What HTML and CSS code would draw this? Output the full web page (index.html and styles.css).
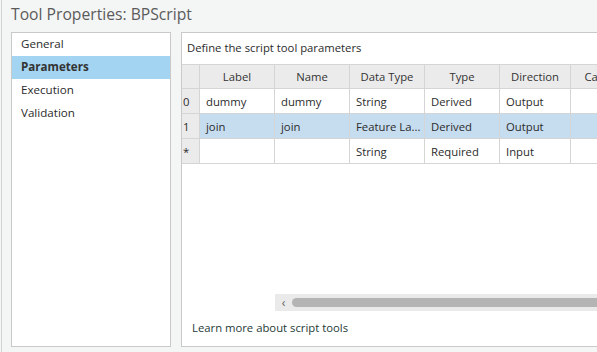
FILE: index.html
```html
<!DOCTYPE html>
<html lang="en">
<head>
    <meta charset="UTF-8">
    <title>Tool Properties: BPScript</title>
    <link rel="stylesheet" href="styles.css">
</head>
<body>
    <div class="window">
        <div class="title">Tool Properties: BPScript</div>
        <div class="main">
            <ul class="nav">
                <li class="nav-item">General</li>
                <li class="nav-item active">Parameters</li>
                <li class="nav-item">Execution</li>
                <li class="nav-item">Validation</li>
            </ul>
            <div class="content">
                <div class="caption">Define the script tool parameters</div>
                <table class="grid">
                    <colgroup>
                        <col class="c-num">
                        <col class="c-wide">
                        <col class="c-wide">
                        <col class="c-wide">
                        <col class="c-wide">
                        <col class="c-dir">
                        <col class="c-wide">
                    </colgroup>
                    <thead>
                        <tr>
                            <th></th>
                            <th>Label</th>
                            <th>Name</th>
                            <th>Data Type</th>
                            <th>Type</th>
                            <th>Direction</th>
                            <th>Category</th>
                        </tr>
                    </thead>
                    <tbody>
                        <tr>
                            <td class="num">0</td>
                            <td>dummy</td>
                            <td>dummy</td>
                            <td>String</td>
                            <td>Derived</td>
                            <td>Output</td>
                            <td></td>
                        </tr>
                        <tr class="selected">
                            <td class="num">1</td>
                            <td>join</td>
                            <td>join</td>
                            <td>Feature La...</td>
                            <td>Derived</td>
                            <td>Output</td>
                            <td></td>
                        </tr>
                        <tr>
                            <td class="num">*</td>
                            <td></td>
                            <td></td>
                            <td>String</td>
                            <td>Required</td>
                            <td>Input</td>
                            <td></td>
                        </tr>
                    </tbody>
                </table>
                <div class="spacer"></div>
                <div class="hscroll">
                    <span class="arrow">&#8249;</span>
                    <div class="thumb"></div>
                </div>
                <div class="link">Learn more about script tools</div>
            </div>
        </div>
    </div>
</body>
</html>
```

FILE: styles.css
```css
html, body {
    margin: 0;
    height: 100%;
    overflow: hidden;
}
body {
    background-color: #f4f5f5;
    font-family: 'Open Sans', 'Noto Sans', sans-serif;
    font-size: 11.3px;
    color: #262626;
}
.window {
    height: 352px;
    border-left: 1px solid #d3d3d3;
    margin-left: 1px;
    box-sizing: border-box;
}
.title {
    height: 32px;
    padding-left: 9px;
    font-size: 15.7px;
    line-height: 28px;
    color: #5b5b5b;
}
.main {
    display: flex;
    gap: 10px;
    padding-left: 9px;
    height: 315px;
}
.nav {
    list-style: none;
    margin: 0;
    padding: 0;
    width: 160px;
    flex: none;
    background-color: #fff;
    border: 1px solid #c9c9c9;
    box-sizing: border-box;
}
.nav-item {
    height: 23px;
    line-height: 22px;
    padding-left: 9px;
    font-size: 11.6px;
    color: #2b2b2b;
}
.nav-item.active {
    background-color: #a3d4f1;
    font-weight: bold;
    color: #333;
}
.content {
    width: 460px;
    flex: none;
    display: flex;
    flex-direction: column;
    overflow: hidden;
    background-color: #fff;
    border: 1px solid #c9c9c9;
    border-right: none;
    box-sizing: border-box;
}
.caption {
    height: 31px;
    line-height: 29px;
    padding-left: 5px;
    flex: none;
    color: #2b2b2b;
}
.grid {
    border-collapse: separate;
    border-spacing: 0;
    table-layout: fixed;
    width: 464px;
    flex: none;
}
.c-num { width: 18px; }
.c-wide { width: 75px; }
.c-dir { width: 71px; }
.grid th,
.grid td {
    box-sizing: border-box;
    border-right: 1px solid #d5d5d5;
    border-bottom: 1px solid #d5d5d5;
    height: 25px;
    padding: 0 6px;
    white-space: nowrap;
    overflow: hidden;
    text-align: left;
    font-weight: normal;
    color: #2b2b2b;
}
.grid th {
    border-top: 1px solid #d5d5d5;
    height: 25px;
    background-color: #ebebeb;
    text-align: center;
    color: #333;
}
.grid td.num {
    padding: 0 0 0 1px;
    background-color: #ebebeb;
}
.grid tr.selected td {
    background-color: #c6dcef;
}
.grid tr.selected td.num {
    background-color: #ebebeb;
}
.spacer {
    flex: 1;
}
.hscroll {
    display: flex;
    align-items: center;
    flex: none;
    margin-left: 93px;
    height: 17px;
    background-color: #eaeaea;
}
.arrow {
    width: 17px;
    text-align: center;
    font-size: 12px;
    color: #606060;
}
.thumb {
    flex: 1;
    height: 9px;
    border-radius: 5px 0 0 5px;
    background-color: #b4b4b4;
}
.link {
    height: 35px;
    line-height: 33px;
    padding-left: 10px;
    flex: none;
    color: #1d3b36;
}
```
